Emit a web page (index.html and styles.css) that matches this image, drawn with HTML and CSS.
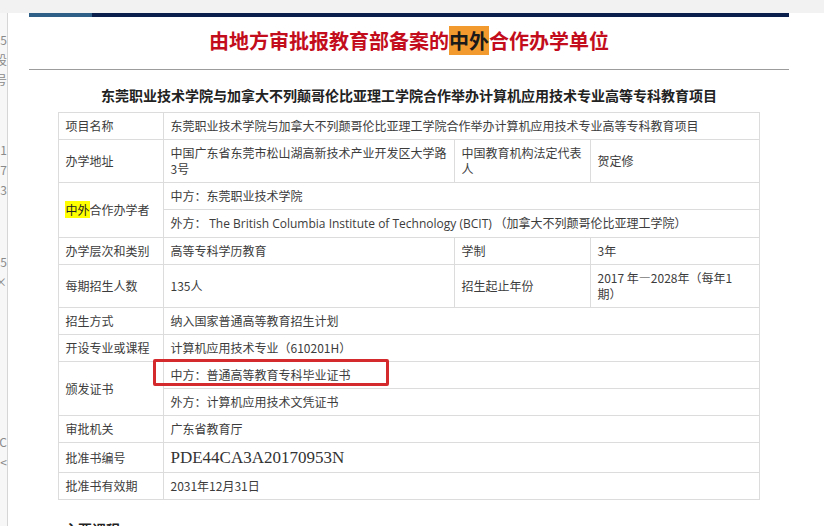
FILE: index.html
```html
<!DOCTYPE html>
<html lang="zh-CN">
<head>
  <meta charset="UTF-8">
  <title>由地方审批报教育部备案的中外合作办学单位</title>
  <link rel="stylesheet" href="styles.css">
</head>
<body>
  <div class="topband"></div>
  <div class="page">
    <aside class="side">
      <div class="side-group g1">
        <div class="side-line"><span>5</span></div>
        <div class="side-line"><span>设</span></div>
        <div class="side-line"><span>号</span></div>
      </div>
      <div class="side-group g2">
        <div class="side-line"><span>1</span></div>
        <div class="side-line"><span>7</span></div>
        <div class="side-line"><span>3</span></div>
      </div>
      <div class="side-group g3">
        <div class="side-line"><span>5</span></div>
        <div class="side-line"><span>×</span></div>
      </div>
      <div class="side-group g4">
        <div class="side-line"><span>C</span></div>
        <div class="side-line"><span>&lt;</span></div>
      </div>
    </aside>

    <main class="main">
      <div class="article">
        <div class="bar"></div>
        <h1 class="title">由地方审批报教育部备案的<span class="hl-orange">中外</span>合作办学单位</h1>
        <hr class="rule">
        <h2 class="subtitle">东莞职业技术学院与加拿大不列颠哥伦比亚理工学院合作举办计算机应用技术专业高等专科教育项目</h2>

        <table class="info">
          <colgroup>
            <col class="c1">
            <col class="c2">
            <col class="c3">
            <col class="c4">
          </colgroup>
          <tr>
            <td>项目名称</td>
            <td colspan="3">东莞职业技术学院与加拿大不列颠哥伦比亚理工学院合作举办计算机应用技术专业高等专科教育项目</td>
          </tr>
          <tr>
            <td>办学地址</td>
            <td>中国广东省东莞市松山湖高新技术产业开发区大学路3号</td>
            <td>中国教育机构法定代表人</td>
            <td>贺定修</td>
          </tr>
          <tr>
            <td rowspan="2"><span class="hl-yellow">中外</span>合作办学者</td>
            <td colspan="3">中方：东莞职业技术学院</td>
          </tr>
          <tr>
            <td colspan="3">外方：&nbsp;<span class="latin">The British Columbia Institute of Technology (BCIT)</span> （加拿大不列颠哥伦比亚理工学院）</td>
          </tr>
          <tr>
            <td>办学层次和类别</td>
            <td>高等专科学历教育</td>
            <td>学制</td>
            <td>3年</td>
          </tr>
          <tr>
            <td>每期招生人数</td>
            <td>135人</td>
            <td>招生起止年份</td>
            <td>2017 年—2028年（每年1期）</td>
          </tr>
          <tr>
            <td>招生方式</td>
            <td colspan="3">纳入国家普通高等教育招生计划</td>
          </tr>
          <tr>
            <td>开设专业或课程</td>
            <td colspan="3">计算机应用技术专业（610201H）</td>
          </tr>
          <tr>
            <td rowspan="2">颁发证书</td>
            <td colspan="3" class="marked">中方：普通高等教育专科毕业证书<span class="red-box"></span></td>
          </tr>
          <tr>
            <td colspan="3">外方：计算机应用技术文凭证书</td>
          </tr>
          <tr>
            <td>审批机关</td>
            <td colspan="3">广东省教育厅</td>
          </tr>
          <tr>
            <td>批准书编号</td>
            <td colspan="3" class="code">PDE44CA3A20170953N</td>
          </tr>
          <tr>
            <td>批准书有效期</td>
            <td colspan="3">2031年12月31日</td>
          </tr>
        </table>

        <h3 class="next">主要课程</h3>
      </div>
    </main>
  </div>
</body>
</html>
```

FILE: styles.css
```css
* {
  box-sizing: border-box;
}

html, body {
  height: 100%;
}

body {
  margin: 0;
  overflow: hidden;
  background: #fff;
  font-family: "Noto Sans CJK SC", "Noto Sans", sans-serif;
  color: #3c3c3c;
  text-spacing-trim: space-all;
}

.topband {
  height: 13px;
  background: #f2f2f2;
}

.page {
  display: flex;
  height: 513px;
}

/* clipped column of a neighbouring panel on the left */
.side {
  width: 8px;
  flex-shrink: 0;
  background: #f7f7f7;
  border-right: 1px solid #d6d6d6;
  overflow: hidden;
  color: #8a8a8a;
  font-size: 12px;
}

.side-line {
  display: flex;
  justify-content: flex-end;
  height: 20px;
  line-height: 20px;
  white-space: nowrap;
}

.g1 { margin-top: 17px; }
.g2 { margin-top: 50px; }
.g3 { margin-top: 52px; }
.g4 { margin-top: 140px; }

.main {
  flex: 1;
}

.article {
  width: 760px;
  margin-left: 21px;
}

.bar {
  height: 4px;
  background: linear-gradient(to right, #2d5f87 0, #2d5f87 63px, #0b1f4d 63px);
}

.title {
  margin: 0;
  padding: 10px 0 14px;
  text-align: center;
  font-size: 20px;
  line-height: 28px;
  font-weight: bold;
  color: #c30d1c;
}

.hl-orange {
  background: #f39a2f;
  color: #1a1a1a;
}

.rule {
  margin: 0;
  border: none;
  border-top: 1px solid #9c9c9c;
}

.subtitle {
  margin: 15px 0 7px;
  text-align: center;
  font-size: 14px;
  line-height: 20px;
  font-weight: bold;
  color: #222;
}

.info {
  width: 700px;
  margin: 0 auto;
  border-collapse: collapse;
  table-layout: fixed;
  font-size: 12px;
  line-height: 16px;
}

.c1 { width: 105px; }
.c2 { width: 291px; }
.c3 { width: 136px; }
.c4 { width: 168px; }

.info td {
  border: 1px solid #dcdcdc;
  padding: 5px 6px;
  vertical-align: middle;
}

.hl-yellow {
  background: #ffff00;
  color: #222;
}

.latin {
  font-family: "Open Sans", "Noto Sans", sans-serif;
  font-size: 12px;
}

.marked {
  position: relative;
}

.red-box {
  position: absolute;
  left: -11px;
  top: -3px;
  width: 236px;
  height: 27px;
  border: 3px solid #d42a2d;
  border-radius: 2px;
}

.info td.code {
  font-family: "Liberation Serif", "DejaVu Serif", serif;
  font-size: 17px;
  line-height: 19px;
  color: #333;
}

.next {
  margin: 19px 0 0 35px;
  font-size: 14px;
  line-height: 20px;
  font-weight: bold;
  color: #222;
}
```
